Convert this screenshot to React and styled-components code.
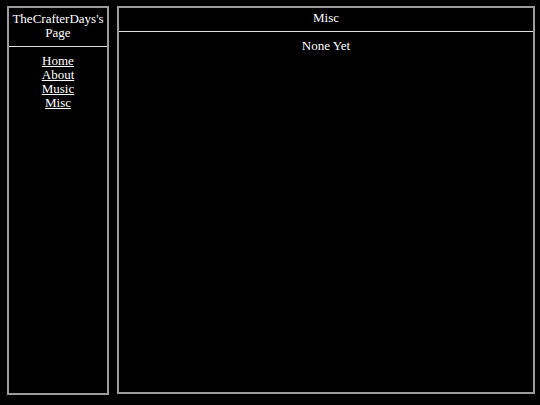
import React from "react";
import styled, { createGlobalStyle } from "styled-components";

const GlobalStyle = createGlobalStyle`
  html, body {
    margin: 0;
    background: #000;
    color: #fff;
    font-family: "Liberation Serif", "Times New Roman", serif;
    font-size: 13px;
    line-height: 14px;
  }
`;

const Page = styled.div`
  display: flex;
  gap: 8px;
  padding: 6px 5px 10px 7px;
  height: 405px;
  box-sizing: border-box;
`;

const Panel = styled.div`
  border: 2px solid #9c9c9c;
  display: flex;
  flex-direction: column;
  box-sizing: border-box;
  width: ${(p) => p.width || "auto"};
  flex: ${(p) => (p.grow ? 1 : "none")};
  height: ${(p) => p.height};
`;

const Header = styled.div`
  text-align: center;
  padding: ${(p) => p.pad};
  border-bottom: 1px solid #e0e0e0;
`;

const Body = styled.div`
  text-align: center;
  padding: ${(p) => p.pad};
`;

const NavLink = styled.a`
  display: block;
  color: #fff;
  text-decoration: underline;
`;

export default function App() {
  return (
    <>
      <GlobalStyle />
      <Page>
        <Panel width="102px" height="389px">
          <Header pad="4px 2px 6px">
            TheCrafterDays's
            <br />
            Page
          </Header>
          <Body pad="7px 0">
            <NavLink href="#">Home</NavLink>
            <NavLink href="#">About</NavLink>
            <NavLink href="#">Music</NavLink>
            <NavLink href="#">Misc</NavLink>
          </Body>
        </Panel>
        <Panel grow height="388px">
          <Header pad="3px 0 6px">Misc</Header>
          <Body pad="7px 0">None Yet</Body>
        </Panel>
      </Page>
    </>
  );
}
